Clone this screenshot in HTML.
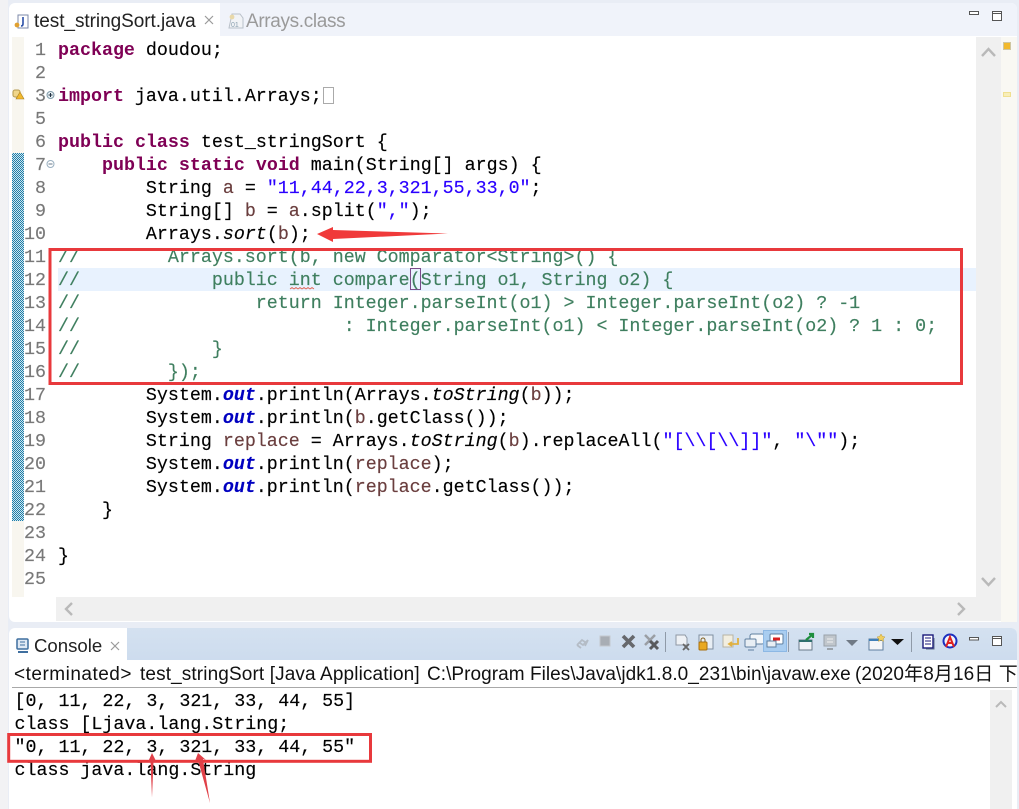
<!DOCTYPE html>
<html><head><meta charset="utf-8">
<style>
html,body{margin:0;padding:0;width:1019px;height:809px;overflow:hidden;background:#e9edf5}
.a{position:absolute}
pre{margin:0;position:absolute;font:18.33px/23px "Liberation Mono","Noto Sans CJK SC",monospace;color:#000;white-space:pre;letter-spacing:-.01px;-webkit-text-stroke:.15px currentColor}
b{color:#7f0055;font-weight:700;-webkit-text-stroke:0}
.c{color:#3f7f5f}
.s{color:#2a00ff}
.v{color:#6a3e3e}
.f{color:#0000c0;font-weight:700;font-style:italic}
i{font-style:italic}
.ui{position:absolute;font-family:"Liberation Sans","Noto Sans CJK SC",sans-serif;white-space:pre}
.t{top:664px;font-size:19px;line-height:22px;color:#111}
</style></head><body>
<div class="a" style="left:0;top:0;width:1019px;height:809px;background:#e9edf5"></div>
<div class="a" style="left:0;top:0;width:8px;height:809px;background:#f2f2f4"></div>
<!-- editor panel -->
<div class="a" style="left:9px;top:3px;width:1008px;height:619px;background:#fff;border-radius:6px"></div>
<div class="a" style="left:220px;top:3px;width:797px;height:33px;background:#f0f3fa;border-radius:0 6px 0 0"></div>
<div class="a" style="left:12px;top:37px;width:12px;height:560px;background:#f8f6ef"></div>
<div class="a" style="left:12px;top:153px;width:12px;height:368px;background:repeating-conic-gradient(#1f7ea8 0 25%,#cfe6f0 0 50%) 0 0/2px 2px"></div>
<div class="a" style="left:976px;top:37px;width:25px;height:560px;background:#f0f0f0"></div>
<div class="a" style="left:1001px;top:37px;width:16px;height:585px;background:#f9f8f3"></div>
<div class="a" style="left:56px;top:597px;width:945px;height:24px;background:#f0f0f0"></div>
<div class="a" style="left:58px;top:268px;width:918px;height:23px;background:#e8f2fe"></div>
<div class="ui" style="left:34px;top:10px;font-size:19px;line-height:24px;color:#222;letter-spacing:-.05px">test_stringSort.java</div>
<div class="ui" style="left:246px;top:10px;font-size:19px;line-height:24px;color:#9a9a9a;letter-spacing:-.35px">Arrays.class</div>
<svg class="a" style="left:0;top:0" width="1019" height="809">
 <!-- tab icons -->
 <path d="M18 15h10v13H18z" fill="#fff" stroke="#7c8aa8"/><path d="M23 17v7q0 2-2 2" fill="none" stroke="#2b50a8" stroke-width="1.6"/><circle cx="17" cy="25" r="2.4" fill="#e0a030"/>
 <path d="M205 16l8 8M213 16l-8 8" stroke="#9a9a9a" stroke-width="1.2"/>
 <path d="M232 14h8l3 4v10h-14z" fill="#f1f3f6" stroke="#b9c0c9"/><text x="231" y="27" font-size="7" font-family="Liberation Sans" fill="#8aa0b0">01</text><circle cx="232" cy="17" r="2.4" fill="#e8d8a8"/>
 <!-- window buttons -->
 <rect x="969.500" y="11.500" width="9" height="3" fill="#fff" stroke="#555"/>
 <rect x="992.500" y="11.500" width="9" height="9" fill="#fff" stroke="#555"/><path d="M992 13.500h10" stroke="#555"/>
 <!-- ruler marks -->
 <rect x="1003.500" y="42.500" width="7" height="7" fill="#f2b92c" stroke="#cfc6a0"/>
 <rect x="1003.500" y="92.500" width="7" height="4" fill="#f8eeb8" stroke="#f0e090"/>
 <!-- gutter warning -->
 <rect x="13" y="90" width="7" height="7" rx="2" fill="#f0d68a" stroke="#b59a50"/><path d="M20 92l4 7h-8z" fill="#f2b92c" stroke="#a87f20" stroke-width=".6"/>
 <circle cx="50.500" cy="95" r="3.500" fill="#e8f0f4" stroke="#7f9aa8"/><path d="M48.500 95h4M50.500 93v4" stroke="#234"/>
 <circle cx="50.500" cy="164" r="3.500" fill="#fff" stroke="#9ab0c0"/><path d="M48.500 164h4" stroke="#678"/>
 <rect x="323.500" y="87.500" width="10" height="16" fill="#fff" stroke="#aaa"/>
 <!-- bracket match -->
 <rect x="410.500" y="268.500" width="10" height="21" fill="none" stroke="#7a4a8a"/>
 <!-- squiggle -->
 <path d="M290 289l2 -1.500 2 1.500 2 -1.500 2 1.500 2 -1.500 2 1.500 2 -1.500 2 1.500 2 -1.500 2 1.500 2 -1.500 2 1.500" fill="none" stroke="#e06050" stroke-width=".8"/>
 <!-- scroll arrows -->
 <path d="M982 56l6.500-7 6.500 7" fill="none" stroke="#b9b9b9" stroke-width="2.400"/>
 <path d="M982 578l6.500 7 6.500-7" fill="none" stroke="#b9b9b9" stroke-width="2.400"/>
 <path d="M72 603l-6 6 6 6" fill="none" stroke="#b9b9b9" stroke-width="2.400"/>
 <path d="M958 603l6 6-6 6" fill="none" stroke="#b9b9b9" stroke-width="2.400"/>
</svg>
<pre style="left:12px;top:39px;width:34px;text-align:right;color:#787878">1
2
3
5
6
7
8
9
10
11
12
13
14
15
16
17
18
19
20
21
22
23
24
25</pre>
<pre style="left:58px;top:39px"><b>package</b> doudou;

<b>import</b> java.util.Arrays;

<b>public</b> <b>class</b> test_stringSort {
    <b>public</b> <b>static</b> <b>void</b> main(String[] args) {
        String <span class="v">a</span> = <span class="s">"11,44,22,3,321,55,33,0"</span>;
        String[] <span class="v">b</span> = <span class="v">a</span>.split(<span class="s">","</span>);
        Arrays.<i>sort</i>(<span class="v">b</span>);
<span class="c">//        Arrays.sort(b, new Comparator&lt;String&gt;() {
//            public int compare(String o1, String o2) {
//                return Integer.parseInt(o1) &gt; Integer.parseInt(o2) ? -1
//                        : Integer.parseInt(o1) &lt; Integer.parseInt(o2) ? 1 : 0;
//            }
//        });</span>
        System.<span class="f">out</span>.println(Arrays.<i>toString</i>(<span class="v">b</span>));
        System.<span class="f">out</span>.println(<span class="v">b</span>.getClass());
        String <span class="v">replace</span> = Arrays.<i>toString</i>(<span class="v">b</span>).replaceAll(<span class="s">"[\\[\\]]"</span>, <span class="s">"\""</span>);
        System.<span class="f">out</span>.println(<span class="v">replace</span>);
        System.<span class="f">out</span>.println(<span class="v">replace</span>.getClass());
    }

}
</pre>
<!-- console panel -->
<div class="a" style="left:9px;top:628px;width:1008px;height:181px;background:#fff;border-radius:6px 6px 0 0"></div>
<div class="a" style="left:127px;top:628px;width:890px;height:32px;background:linear-gradient(#d4e1f0,#cddcee);border-radius:0 6px 0 0"></div>
<div class="ui" style="left:34px;top:634px;font-size:18.6px;line-height:24px;color:#222">Console</div>
<div class="ui t" style="left:14px;letter-spacing:.5px">&lt;terminated&gt;</div>
<div class="ui t" style="left:140px;letter-spacing:.12px">test_stringSort [Java Application]</div>
<div class="ui t" style="left:427px;letter-spacing:.05px">C:\Program Files\Java\jdk1.8.0_231\bin\javaw.exe</div>
<div class="ui t" style="left:855px;letter-spacing:.1px">(2020年8月16日 下</div>
<div class="a" style="left:12px;top:687px;width:1005px;height:1px;background:#a8a8a8"></div>
<div class="a" style="left:990px;top:690px;width:22px;height:119px;background:#f0f0f0"></div>
<pre style="left:14.500px;top:690px">[0, 11, 22, 3, 321, 33, 44, 55]
class [Ljava.lang.String;
"0, 11, 22, 3, 321, 33, 44, 55"
class java.lang.String</pre>
<svg class="a" style="left:0;top:0" width="1019" height="809">
 <!-- console tab icon -->
 <rect x="17" y="639" width="11" height="10" rx="1" fill="#dfe9f4" stroke="#3f6f9f" stroke-width="1.500"/><path d="M20 642h5M20 645h5" stroke="#3f6f9f"/><path d="M18 652h10" stroke="#3f6f9f" stroke-width="2"/>
 <path d="M111 642l8 8M119 642l-8 8" stroke="#9a9a9a" stroke-width="1.200"/>
 <!-- toolbar -->
 <path d="M577 645l5-5 3 2M588 640l-5 5-3-2M577 645l4 3M588 640l-3 6" fill="none" stroke="#b4bcc6" stroke-width="1.800"/>
 <rect x="600" y="636" width="10" height="10" fill="#a8adb4" stroke="#c4c8ce"/>
 <path d="M623 636l11 11M634 636l-11 11" stroke="#66686c" stroke-width="3.600"/>
 <path d="M645 635l10 10M655 635l-10 10" stroke="#9a9ea4" stroke-width="2.500"/><path d="M650 641l8 8M658 641l-8 8" stroke="#585a5e" stroke-width="3"/>
 <path d="M665.500 632v20" stroke="#8f9aa8"/>
 <path d="M676 635h9l2 3v7h-11z" fill="#eef1f5" stroke="#8f98a4"/><path d="M683 644l6 6M689 644l-6 6" stroke="#666" stroke-width="1.800"/>
 <rect x="699" y="635" width="14" height="14" fill="#e8eef4" stroke="#7f8fa0"/><rect x="699" y="642" width="8" height="8" rx="1" fill="#e8a820" stroke="#a87010"/><path d="M701 642v-2a2 2 0 0 1 4 0v2" fill="none" stroke="#806020"/>
 <path d="M723 635h10v12h-10z" fill="#f2eee0" stroke="#b8b4a4"/><path d="M738 638v6h-8m2-2l-3 2 3 2" fill="none" stroke="#e0b040" stroke-width="1.800"/>
 <rect x="750" y="634" width="14" height="10" rx="2" fill="#f4f7fa" stroke="#5f7f9f"/><rect x="745" y="639" width="11" height="8" rx="1" fill="#e8eef4" stroke="#5f7f9f"/><path d="M748 650h6" stroke="#5f7f9f"/>
 <rect x="763.500" y="630.500" width="23" height="21" fill="#a9cdf0" stroke="#8db8e4"/>
 <rect x="770" y="634" width="13" height="10" rx="1" fill="#fff" stroke="#5f7f9f"/><path d="M773 639h7" stroke="#d82020" stroke-width="3"/><rect x="767" y="641" width="9" height="6" fill="#e8eef4" stroke="#5f7f9f"/>
 <path d="M788.500 632v20" stroke="#8f9aa8"/>
 <rect x="799" y="640" width="13" height="10" fill="#f0f4f8" stroke="#6a7a8a"/><path d="M799 640h13v2h-13z" fill="#2f6f6f"/><path d="M806 640l6-5m-3-1h4v4" fill="none" stroke="#1f8f3f" stroke-width="2.200"/>
 <rect x="824" y="635" width="12" height="11" fill="#c0c6cc" stroke="#9aa2aa"/><path d="M827 639h6M827 642h6" stroke="#f0f0f0"/><path d="M827 649h6" stroke="#9aa2aa" stroke-width="2"/>
 <path d="M846 640h12l-6 6z" fill="#707a86"/>
 <rect x="869" y="639" width="14" height="11" fill="#f4f6f8" stroke="#5f7f9f"/><path d="M869 639h14v2h-14z" fill="#3f7fb8"/><path d="M881 634l1.500 2.500 2.500 .5-2 2 .5 2.500-2.500-1.500-2.500 1.500 .5-2.500-2-2 2.500-.5z" fill="#f0cf60" stroke="#c09a30" stroke-width=".5"/>
 <path d="M891 639h13l-6.500 6z" fill="#111"/>
 <path d="M911.500 632v20" stroke="#8f9aa8"/>
 <rect x="923" y="635" width="10" height="13" fill="#fff" stroke="#1a1a7a" stroke-width="1.400"/><path d="M925 638h6M925 641h6M925 644h6" stroke="#1a1a7a"/><path d="M934 638v11h-8" fill="none" stroke="#5a6a8a"/>
 <circle cx="950" cy="641" r="6.500" fill="#f4f4fa" stroke="#1a2fc0" stroke-width="2"/><path d="M946 647l4-10 4 10M947.500 643h5" fill="none" stroke="#e02020" stroke-width="2"/>
 <rect x="969.500" y="637.500" width="9" height="2.500" fill="#fff" stroke="#555"/>
 <rect x="992.500" y="636.500" width="9" height="9" fill="#fff" stroke="#555"/><path d="M992 638.500h10" stroke="#555"/>
 <path d="M996 707l5-5 5 5" fill="none" stroke="#b9b9b9" stroke-width="2"/>
 <!-- red annotations -->
 <rect x="50" y="249.500" width="911.500" height="134" fill="none" stroke="#e8393c" stroke-width="3"/>
 <rect x="8.700" y="734.500" width="361.800" height="26.800" fill="none" stroke="#e8393c" stroke-width="3"/>
 <path d="M317 234l16-7v3l115 3.500-115 5.500v3z" fill="#f03a3a"/>
 <path d="M152 753l-4 9 2.500-.5 1.500 36 1.500-36 3 .5z" fill="#e04048"/>
 <path d="M198 753l-3 8 3-1 12 43-7-44 3 1z" fill="#e04048"/>
</svg>
</body></html>
